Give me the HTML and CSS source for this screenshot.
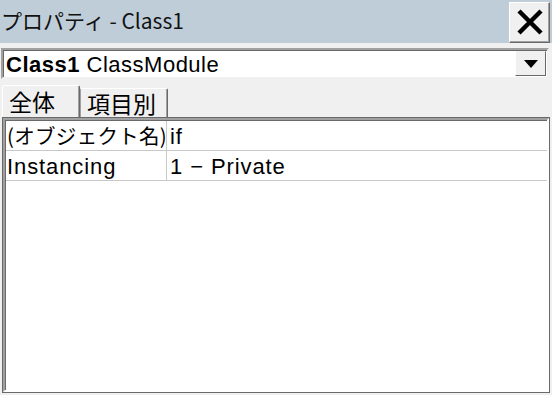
FILE: index.html
```html
<!DOCTYPE html>
<html lang="ja">
<head>
    <meta charset="UTF-8">
    <title>プロパティ - Class1</title>
    <link rel="stylesheet" href="styles.css">
</head>
<body>
    <div class="window">
        <div class="titlebar">
            <span class="title">プロパティ - Class1</span>
            <button class="close">
                <svg width="26" height="26" viewBox="0 0 26 26">
                    <path d="M2 2 L24 24 M24 2 L2 24" stroke="#000" stroke-width="4.5" fill="none"/>
                </svg>
            </button>
        </div>
        <div class="combo">
            <span class="combo-text"><b>Class1</b> ClassModule</span>
            <span class="drop">
                <svg width="14" height="8" viewBox="0 0 14 8"><path d="M0 0 H14 L7 8 Z" fill="#000"/></svg>
            </span>
        </div>
        <div class="tabs">
            <div class="tab active">全体</div>
            <div class="tab">項目別</div>
        </div>
        <div class="grid">
            <div class="row">
                <div class="cell name jp">(オブジェクト名)</div>
                <div class="cell value">if</div>
            </div>
            <div class="row">
                <div class="cell name">Instancing</div>
                <div class="cell value">1 − Private</div>
            </div>
        </div>
    </div>
</body>
</html>
```

FILE: styles.css
```css
body {
    margin: 0;
    background: #f0f0f0;
    font-family: 'Liberation Sans', 'Noto Sans CJK JP', sans-serif;
    color: #000;
}
.window {
    width: 552px;
    height: 395px;
    display: flex;
    flex-direction: column;
    overflow: hidden;
}
.titlebar {
    height: 43px;
    background: #bfcdd9;
    display: flex;
    align-items: center;
    justify-content: space-between;
    flex-shrink: 0;
}
.title {
    font-family: 'Noto Sans CJK JP', sans-serif;
    font-size: 21px;
    padding-left: 1px;
    margin-top: -3px;
    color: #111;
}
.close {
    width: 41px;
    height: 41px;
    margin-right: 2px;
    margin-top: 1px;
    padding: 0;
    background: #f0f0f0;
    border: 1px solid;
    border-color: #fff #696969 #696969 #fff;
    box-shadow: inset -1px -1px 0 #a0a0a0;
    display: flex;
    align-items: center;
    justify-content: center;
}
.combo {
    margin: 5px 3px 0 1px;
    height: 27px;
    background: #fff;
    border: 2px solid;
    border-color: #a0a0a0 #f0f0f0 #f0f0f0 #a0a0a0;
    box-shadow: inset 1px 1px 0 #696969;
    display: flex;
    align-items: center;
    justify-content: space-between;
}
.combo-text {
    font-size: 22px;
    letter-spacing: 0.5px;
    padding-left: 3px;
    margin-top: 2px;
}
.drop {
    width: 31px;
    height: 25px;
    margin-right: 1px;
    background: #f0f0f0;
    border: 1px solid;
    border-color: #f0f0f0 #696969 #696969 #fff;
    display: flex;
    align-items: center;
    justify-content: center;
    box-sizing: border-box;
}
.tabs {
    display: flex;
    align-items: flex-end;
    margin-top: 5px;
    padding-left: 2px;
    height: 34px;
    flex-shrink: 0;
}
.tab {
    font-family: 'Noto Sans CJK JP', sans-serif;
    font-size: 23px;
    line-height: 28px;
    height: 29px;
    padding: 0 6px;
    border: 1px solid;
    border-bottom: none;
    border-color: #fff #696969 #fff #fff;
    box-shadow: inset -1px 0 0 #a0a0a0;
    border-radius: 2px 2px 0 0;
}
.tab.active {
    width: 64px;
    height: 32px;
    line-height: 30px;
}
.tab + .tab {
    width: 74px;
    border-left-color: #a0a0a0;
}
.grid {
    margin: 0 3px 3px 3px;
    flex: 1;
    background: #fff;
    border: 2px solid;
    border-color: #a0a0a0 #fff #fff #a0a0a0;
    box-shadow: inset 1px 1px 0 #696969, 0 0 0 1px #696969;
    padding: 1px 0 0 1px;
}
.row {
    display: grid;
    grid-template-columns: 161px 1fr;
    height: 29px;
    border-bottom: 1px solid #c8c8c8;
}
.cell {
    font-size: 22px;
    line-height: 28px;
    padding: 2px 0 0 1px;
    letter-spacing: 0.9px;
    white-space: nowrap;
    box-sizing: border-box;
}
.cell.name {
    border-right: 1px solid #c8c8c8;
}
.cell.jp {
    font-family: 'Noto Sans CJK JP', sans-serif;
    font-size: 20.5px;
    letter-spacing: 0.3px;
    padding-top: 0;
}
.cell.value {
    padding-left: 3px;
}
```
